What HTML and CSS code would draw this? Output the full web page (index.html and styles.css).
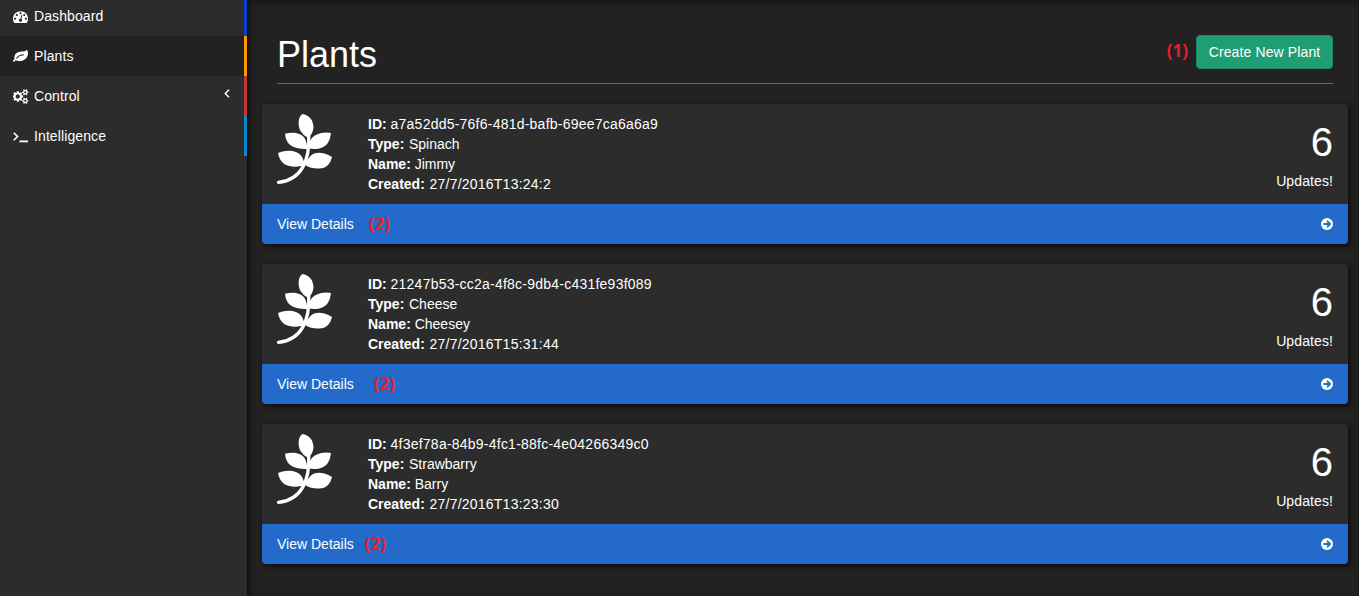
FILE: index.html
```html
<!DOCTYPE html>
<html lang="en">
<head>
<meta charset="utf-8">
<title>Plants</title>
<link rel="stylesheet" href="styles.css">
</head>
<body>
<svg class="sprite" aria-hidden="true">
  <symbol id="plant" viewBox="0 0 90 100">
    <path d="M40.500 14C36 17 35.500 25 38.500 31Q41 35 46 38Q51.500 33 51.500 27C51.300 20 47 15 40.500 14ZM23 33.700C33 31 40 34 42.500 38Q45 42 45.300 49C38 49 31 48 27 44Q23.500 40 23 33.700ZM69 33C60 31 52 35 49.500 38.500Q47 42 47 48.500C55 50 62 48 65.500 43.500Q68.500 39 69 33ZM16 53C26 49 35 51 38.500 55Q42 59 42.500 65.500C34 67.500 26 67 21 63Q17 59 16 53ZM70 57C61 51.500 53 52 49 55.500Q45 59 43 65C49 69 58 69.500 63.500 67Q68.500 64 70 57Z"/>
    <path d="M46.700 35C48 61 39 80 16.500 82.300" fill="none" stroke="currentColor" stroke-width="3.300" stroke-linecap="round"/>
  </symbol>
  <symbol id="arrow" viewBox="0 0 12 12">
    <circle cx="6" cy="6" r="6"/>
    <path d="M2.500 6H9M6 2.800L9.200 6L6 9.200" class="arrow-line"/>
  </symbol>
</svg>
<div class="layout">
  <nav class="sidebar">
    <a class="item blue"><svg class="icon" viewBox="0 0 1792 1792"><path d="M384 1152q0-53-37.500-90.500t-90.500-37.500-90.500 37.500-37.500 90.500 37.500 90.500 90.500 37.500 90.500-37.500 37.500-90.500zm192-448q0-53-37.500-90.500t-90.500-37.500-90.500 37.500-37.500 90.500 37.500 90.500 90.500 37.500 90.500-37.500 37.500-90.500zm428 481l101-382q6-26-7.500-48.500t-38.500-29.500-48 6.500-30 39.500l-101 382q-60 5-107 43.500t-63 98.500q-20 77 20 146t117 89 146-20 89-117q16-60-6-117t-72-91zm660-33q0-53-37.500-90.500t-90.500-37.500-90.500 37.500-37.500 90.500 37.500 90.500 90.500 37.500 90.500-37.500 37.500-90.500zm-640-640q0-53-37.500-90.500t-90.500-37.500-90.500 37.500-37.500 90.500 37.500 90.500 90.500 37.500 90.500-37.500 37.500-90.500zm448 192q0-53-37.500-90.500t-90.500-37.500-90.500 37.500-37.500 90.500 37.500 90.500 90.500 37.500 90.500-37.500 37.500-90.500zm320 448q0 261-141 483-19 29-54 29h-1402q-35 0-54-29-141-221-141-483 0-182 71-348t191-286 286-191 348-71 348 71 286 191 191 286 71 348z"/></svg>Dashboard</a>
    <a class="item orange active"><svg class="icon" viewBox="0 0 1792 1792"><path d="M1280 704q0-26-19-45t-45-19q-172 0-318 49.500t-259.500 134-235.500 219.500q-19 21-19 45 0 26 19 45t45 19q24 0 45-19 27-24 74-71t67-66q137-124 268.500-176t313.500-52q26 0 45-19t19-45zm512-198q0 95-20 193-46 224-184.500 383t-357.500 268q-214 108-438 108-148 0-286-47-15-5-88-42t-96-37q-16 0-39.500 32t-45 70-52.500 70-60 32q-43 0-63.500-17.500t-45.500-59.500q-2-4-6-11t-5.500-10-3-9.500-1.500-13.500q0-35 31-73.500t68-65.500 68-56 31-48q0-4-14-38t-16-44q-9-51-9-104 0-115 43.500-220t119-184.500 170.500-139 204-95.500q55-18 145-25.500t179.500-9 178.500-6 163.500-24 113.500-56.500l29.500-29.500 29.500-28 27-20 36.500-16 43.500-4.500q39 0 70.500 46t47.500 112 24 124 8 96z"/></svg>Plants</a>
    <a class="item red"><svg class="icon cogs" viewBox="0 0 1920 1792"><path d="M832 896q0-106-75-181t-181-75-181 75-75 181 75 181 181 75 181-75 75-181zm768 512q0-52-38-90t-90-38-90 38-38 90q0 53 37.500 90.500t90.500 37.500 90.500-37.500 37.500-90.500zm0-1024q0-52-38-90t-90-38-90 38-38 90q0 53 37.500 90.500t90.500 37.500 90.500-37.500 37.500-90.500zm-384 421v185q0 10-7 19.500t-16 10.500l-155 24q-11 35-32 76 34 48 90 115 7 11 7 20 0 12-7 19-23 30-82.500 89.500t-78.500 59.500q-11 0-21-7l-115-90q-37 19-77 31-11 108-23 155-7 24-30 24h-186q-11 0-20-7.500t-10-17.500l-23-153q-34-10-75-31l-118 89q-7 7-20 7-11 0-21-8-144-133-144-160 0-9 7-19 10-14 41-53t47-61q-23-44-35-82l-152-24q-10-1-17-9.500t-7-19.500v-185q0-10 7-19.500t16-10.500l155-24q11-35 32-76-34-48-90-115-7-11-7-20 0-12 7-20 22-30 82-89t79-59q11 0 21 7l115 90q34-18 77-32 11-108 23-154 7-24 30-24h186q11 0 20 7.500t10 17.500l23 153q34 10 75 31l118-89q8-7 20-7 11 0 21 8 144 133 144 160 0 8-7 19-12 16-42 54t-45 60q23 48 34 82l152 23q10 2 17 10.500t7 19.500zm640 533v140q0 16-149 31-12 27-30 52 51 113 51 138 0 4-4 7-122 71-124 71-8 0-46-47t-52-68q-20 2-30 2t-30-2q-14 21-52 68t-46 47q-2 0-124-71-4-3-4-7 0-25 51-138-18-25-30-52-149-15-149-31v-140q0-16 149-31 13-29 30-52-51-113-51-138 0-4 4-7 4-2 35-20t59-34 30-16q8 0 46 46.500t52 67.500q20-2 30-2t30 2q51-71 92-112l6-2q4 0 124 70 4 3 4 7 0 25-51 138 17 23 30 52 149 15 149 31zm0-1024v140q0 16-149 31-12 27-30 52 51 113 51 138 0 4-4 7-122 71-124 71-8 0-46-47t-52-68q-20 2-30 2t-30-2q-14 21-52 68t-46 47q-2 0-124-71-4-3-4-7 0-25 51-138-18-25-30-52-149-15-149-31v-140q0-16 149-31 13-29 30-52-51-113-51-138 0-4 4-7 4-2 35-20t59-34 30-16q8 0 46 46.500t52 67.500q20-2 30-2t30 2q51-71 92-112l6-2q4 0 124 70 4 3 4 7 0 25-51 138 17 23 30 52 149 15 149 31z"/></svg>Control<svg class="chevron" viewBox="0 0 6 9"><path d="M5 .8L1.300 4.500L5 8.200"/></svg></a>
    <a class="item cyan"><svg class="icon terminal" viewBox="0 0 14 14"><path d="M.7 3.500L4.200 7L.7 10.500M6 11.500H14"/></svg>Intelligence</a>
  </nav>
  <main class="content">
    <header class="page-header">
      <h1>Plants</h1>
      <span class="note">(1)</span>
      <button class="create">Create New Plant</button>
    </header>
    <section class="card">
      <div class="body">
        <svg class="plant"><use href="#plant"/></svg>
        <div class="info"><div><b>ID:</b> <span class="code">a7a52dd5-76f6-481d-bafb-69ee7ca6a6a9</span></div><div><b>Type:</b> <span class="word">Spinach</span></div><div><b>Name:</b> Jimmy</div><div><b>Created:</b> <span class="code date">27/7/2016T13:24:2</span></div></div>
        <div class="updates"><div class="count">6</div><div class="label">Updates!</div></div>
      </div>
      <div class="footer"><span>View Details</span><span class="note first">(2)</span><svg class="arrow"><use href="#arrow"/></svg></div>
    </section>
    <section class="card">
      <div class="body">
        <svg class="plant"><use href="#plant"/></svg>
        <div class="info"><div><b>ID:</b> <span class="code">21247b53-cc2a-4f8c-9db4-c431fe93f089</span></div><div><b>Type:</b> <span class="word">Cheese</span></div><div><b>Name:</b> Cheesey</div><div><b>Created:</b> <span class="code date">27/7/2016T15:31:44</span></div></div>
        <div class="updates"><div class="count">6</div><div class="label">Updates!</div></div>
      </div>
      <div class="footer"><span>View Details</span><span class="note second">(2)</span><svg class="arrow"><use href="#arrow"/></svg></div>
    </section>
    <section class="card">
      <div class="body">
        <svg class="plant"><use href="#plant"/></svg>
        <div class="info"><div><b>ID:</b> <span class="code">4f3ef78a-84b9-4fc1-88fc-4e04266349c0</span></div><div><b>Type:</b> <span class="word">Strawbarry</span></div><div><b>Name:</b> Barry</div><div><b>Created:</b> <span class="code date">27/7/2016T13:23:30</span></div></div>
        <div class="updates"><div class="count">6</div><div class="label">Updates!</div></div>
      </div>
      <div class="footer"><span>View Details</span><span class="note third">(2)</span><svg class="arrow"><use href="#arrow"/></svg></div>
    </section>
  </main>
</div>
</body>
</html>
```
FILE: styles.css
```css
* { box-sizing: border-box; }
body { margin: 0; background: #222; color: #fff; font: 14px/20px "Liberation Sans", Arial, sans-serif; overflow: hidden; }
svg { fill: currentColor; flex: none; }
.sprite { display: none; }
.layout { display: flex; height: 596px; box-shadow: inset 0 3px 6px -2px #111; }
.sidebar { width: 247px; background: #2c2c2c; box-shadow: 1px 0 5px 1px #0b0b0b; letter-spacing: .1px; }
.item { display: flex; align-items: center; height: 40px; padding-left: 14px; border-right: 3px solid; }
.item.blue { height: 36px; padding-bottom: 4px; border-right-color: #0540d2; }
.item.orange { border-right-color: #ff9800; }
.item.red { border-right-color: #c23531; }
.item.cyan { border-right-color: #078bd0; }
.item.active { background: #222; }
.icon { width: 15px; height: 15px; margin: 0 6px 0 -1px; }
.icon.cogs { width: 16px; margin-right: 5px; }
.terminal, .chevron { fill: none; stroke: #fff; stroke-width: 1.5; }
.chevron { width: 6px; height: 9px; margin: -5px 14px 0 auto; }
.content { flex: 1; padding: 20px 11px 0 15px; }
.page-header { display: flex; align-items: flex-start; height: 64px; margin: 0 15px 20px; padding-top: 15px; border-bottom: 1px solid #1f8f69; }
h1 { margin: 0 auto 0 0; font-size: 36px; line-height: 40px; font-weight: 400; }
.create { height: 34px; width: 137px; padding: 0; border: 1px solid #1b8a64; border-radius: 4px; background: #1f9d73; color: #fff; font: inherit; letter-spacing: .12px; }
.note { color: #ed1c24; font: bold 17px/20px "Open Sans", sans-serif; }
.page-header .note { margin: 6px 8px 0 0; }
.card { height: 140px; margin-bottom: 20px; border-radius: 4px; overflow: hidden; background: #2c2c2c; box-shadow: 2px 2px 5px #0b0b0b; }
.body { display: flex; height: 100px; padding-right: 15px; }
.plant { width: 90px; height: 100px; margin-top: -4px; }
.info { margin: 10px 0 0 16px; }
.code { letter-spacing: .23px; }
.word, .date { margin-left: .8px; }
.updates { margin: 16px 0 0 auto; text-align: right; }
.label { letter-spacing: .1px; }
.count { height: 51px; font-size: 40px; line-height: 44px; }
.footer { display: flex; align-items: center; height: 40px; padding: 0 15px; background: #246aca; }
.first { margin-left: 15px; }
.second { margin-left: 20px; }
.third { margin-left: 11px; }
.arrow { width: 12px; height: 12px; margin-left: auto; }
.arrow-line { fill: none; stroke: #246aca; stroke-width: 1.8; }
```
